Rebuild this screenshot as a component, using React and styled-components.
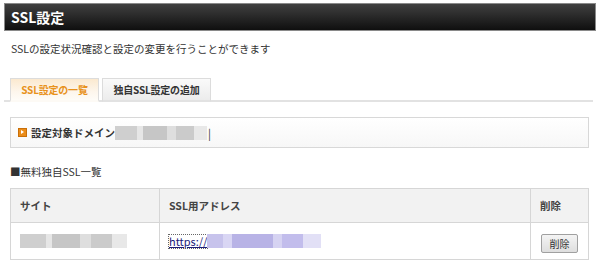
import styled, { createGlobalStyle } from 'styled-components';

const GlobalStyle = createGlobalStyle`
  body {
    margin: 0;
    background: #fff;
    font-family: "Noto Sans CJK JP", "Noto Sans", sans-serif;
    color: #333;
  }
`;

const App = () => {
  return (
    <>
      <GlobalStyle />
      <Page>
        <Header>
          <HeaderTitle>SSL設定</HeaderTitle>
        </Header>
        <Lead>SSLの設定状況確認と設定の変更を行うことができます</Lead>

        <Tabs>
          <Tab $active $w={89}>SSL設定の一覧</Tab>
          <Tab $w={109}>独自SSL設定の追加</Tab>
        </Tabs>

        <DomainBox>
          <DomainIcon />
          <DomainLabel>設定対象ドメイン</DomainLabel>
          <Blur $w={92} $tone="gray" />
          <Pipe>|</Pipe>
        </DomainBox>

        <SectionTitle>■無料独自SSL一覧</SectionTitle>

        <Table>
          <colgroup>
            <col style={{ width: 149 }} />
            <col />
            <col style={{ width: 58 }} />
          </colgroup>
          <thead>
            <tr>
              <Th>サイト</Th>
              <Th>SSL用アドレス</Th>
              <Th>削除</Th>
            </tr>
          </thead>
          <tbody>
            <tr>
              <Td>
                <Blur $w={107} $tone="gray" />
              </Td>
              <Td>
                <LinkRow>
                  <UrlLink href="#">https://</UrlLink>
                  <Blur $w={114} $tone="blue" />
                </LinkRow>
              </Td>
              <Td>
                <DeleteButton type="button">削除</DeleteButton>
              </Td>
            </tr>
          </tbody>
        </Table>
      </Page>
    </>
  );
};

export default App;

const Page = styled.div`
  width: 600px;
  height: 269px;
  padding: 3px 4px 0;
  box-sizing: border-box;
  display: flex;
  flex-direction: column;
`;

const Header = styled.div`
  height: 28px;
  box-sizing: border-box;
  border: 1px solid #8a8a8a;
  background: linear-gradient(#404040, #2a2a2a 45%, #0f0f0f);
  display: flex;
  align-items: center;
  padding-left: 6px;
`;

const HeaderTitle = styled.h1`
  margin: 0;
  color: #fff;
  font-size: 14px;
  font-weight: 700;
  line-height: 1;
`;

const Lead = styled.p`
  margin: 11px 0 0 7px;
  font-size: 10.5px;
  line-height: 14px;
  color: #333;
`;

const Tabs = styled.div`
  margin-top: 22px;
  padding-left: 6px;
  display: flex;
  gap: 3px;
  border-bottom: 2px solid #e2e2e2;
  width: 583px;
`;

const Tab = styled.div`
  width: ${p => p.$w}px;
  height: 24px;
  box-sizing: border-box;
  margin-bottom: -2px;
  display: flex;
  align-items: center;
  justify-content: center;
  white-space: nowrap;
  border: 1px solid #dcdcdc;
  border-bottom: ${p => (p.$active ? '2px solid #fdfaf5' : '2px solid #e2e2e2')};
  background: ${p =>
    p.$active
      ? 'linear-gradient(#fbe9cf, #fdf6ec 60%, #fefcf8)'
      : 'linear-gradient(#fafafa, #ececec)'};
  color: ${p => (p.$active ? '#e8921c' : '#333')};
  font-size: 10px;
  font-weight: 700;
  letter-spacing: -0.2px;
`;

const DomainBox = styled.div`
  margin: 15px 0 0 6px;
  width: 579px;
  height: 31px;
  box-sizing: border-box;
  border: 1px solid #d8d8d8;
  background: linear-gradient(#fff, #f7f7f7);
  display: flex;
  align-items: center;
  padding-left: 7px;
`;

const DomainIcon = styled.span`
  width: 7px;
  height: 7px;
  margin-right: 4px;
  background: #ea8c1a;
  border: 1px solid #c96f08;
  position: relative;

  &::after {
    content: '';
    position: absolute;
    left: 2px;
    top: 1px;
    border-left: 3px solid #fff;
    border-top: 2.5px solid transparent;
    border-bottom: 2.5px solid transparent;
  }
`;

const DomainLabel = styled.span`
  font-size: 10.5px;
  font-weight: 700;
  color: #333;
`;

const Pipe = styled.span`
  font-size: 11px;
  color: #333;
  margin-left: 1px;
`;

const Blur = styled.span`
  display: inline-block;
  flex-shrink: 0;
  width: ${p => p.$w}px;
  height: 14px;
  background: ${p =>
    p.$tone === 'blue'
      ? `linear-gradient(90deg, #c7c3ec 0 14%, #d9d6f4 14% 22%, #b8b3e6 22% 58%, #d6d3f2 58% 66%, #c2bdec 66% 84%, #e2e0f6 84%)`
      : `linear-gradient(90deg, #cfcfcf 0 24%, #e6e6e6 24% 30%, #c6c6c6 30% 56%, #dedede 56% 66%, #cbcbcb 66% 86%, #e8e8e8 86%)`};
`;

const SectionTitle = styled.div`
  margin: 17px 0 0 6px;
  font-size: 10.5px;
  line-height: 14px;
  color: #333;
`;

const Table = styled.table`
  margin: 9px 0 0 6px;
  width: 579px;
  table-layout: fixed;
  border-collapse: collapse;
  border: 1px solid #d6d6d6;
`;

const Th = styled.th`
  height: 33px;
  padding: 0 9px;
  background: #f2f2f2;
  border: 1px solid #d6d6d6;
  text-align: left;
  font-size: 10.5px;
  font-weight: 700;
  color: #444;
  white-space: nowrap;
`;

const Td = styled.td`
  height: 36px;
  padding: 0 9px;
  border: 1px solid #d6d6d6;
  background: #fff;
  vertical-align: middle;
`;

const LinkRow = styled.div`
  display: flex;
  align-items: center;
`;

const UrlLink = styled.a`
  font-size: 11px;
  color: #1c1c78;
  text-decoration: underline;
  outline: 1px dotted #666;
  outline-offset: 0;
  line-height: 13px;
`;

const DeleteButton = styled.button`
  margin-left: 1px;
  width: 37px;
  height: 19px;
  padding: 0;
  border: 1px solid #a0a0a0;
  border-radius: 2px;
  background: linear-gradient(#f4f4f4, #dedede);
  font-family: inherit;
  font-size: 10px;
  color: #333;
`;
